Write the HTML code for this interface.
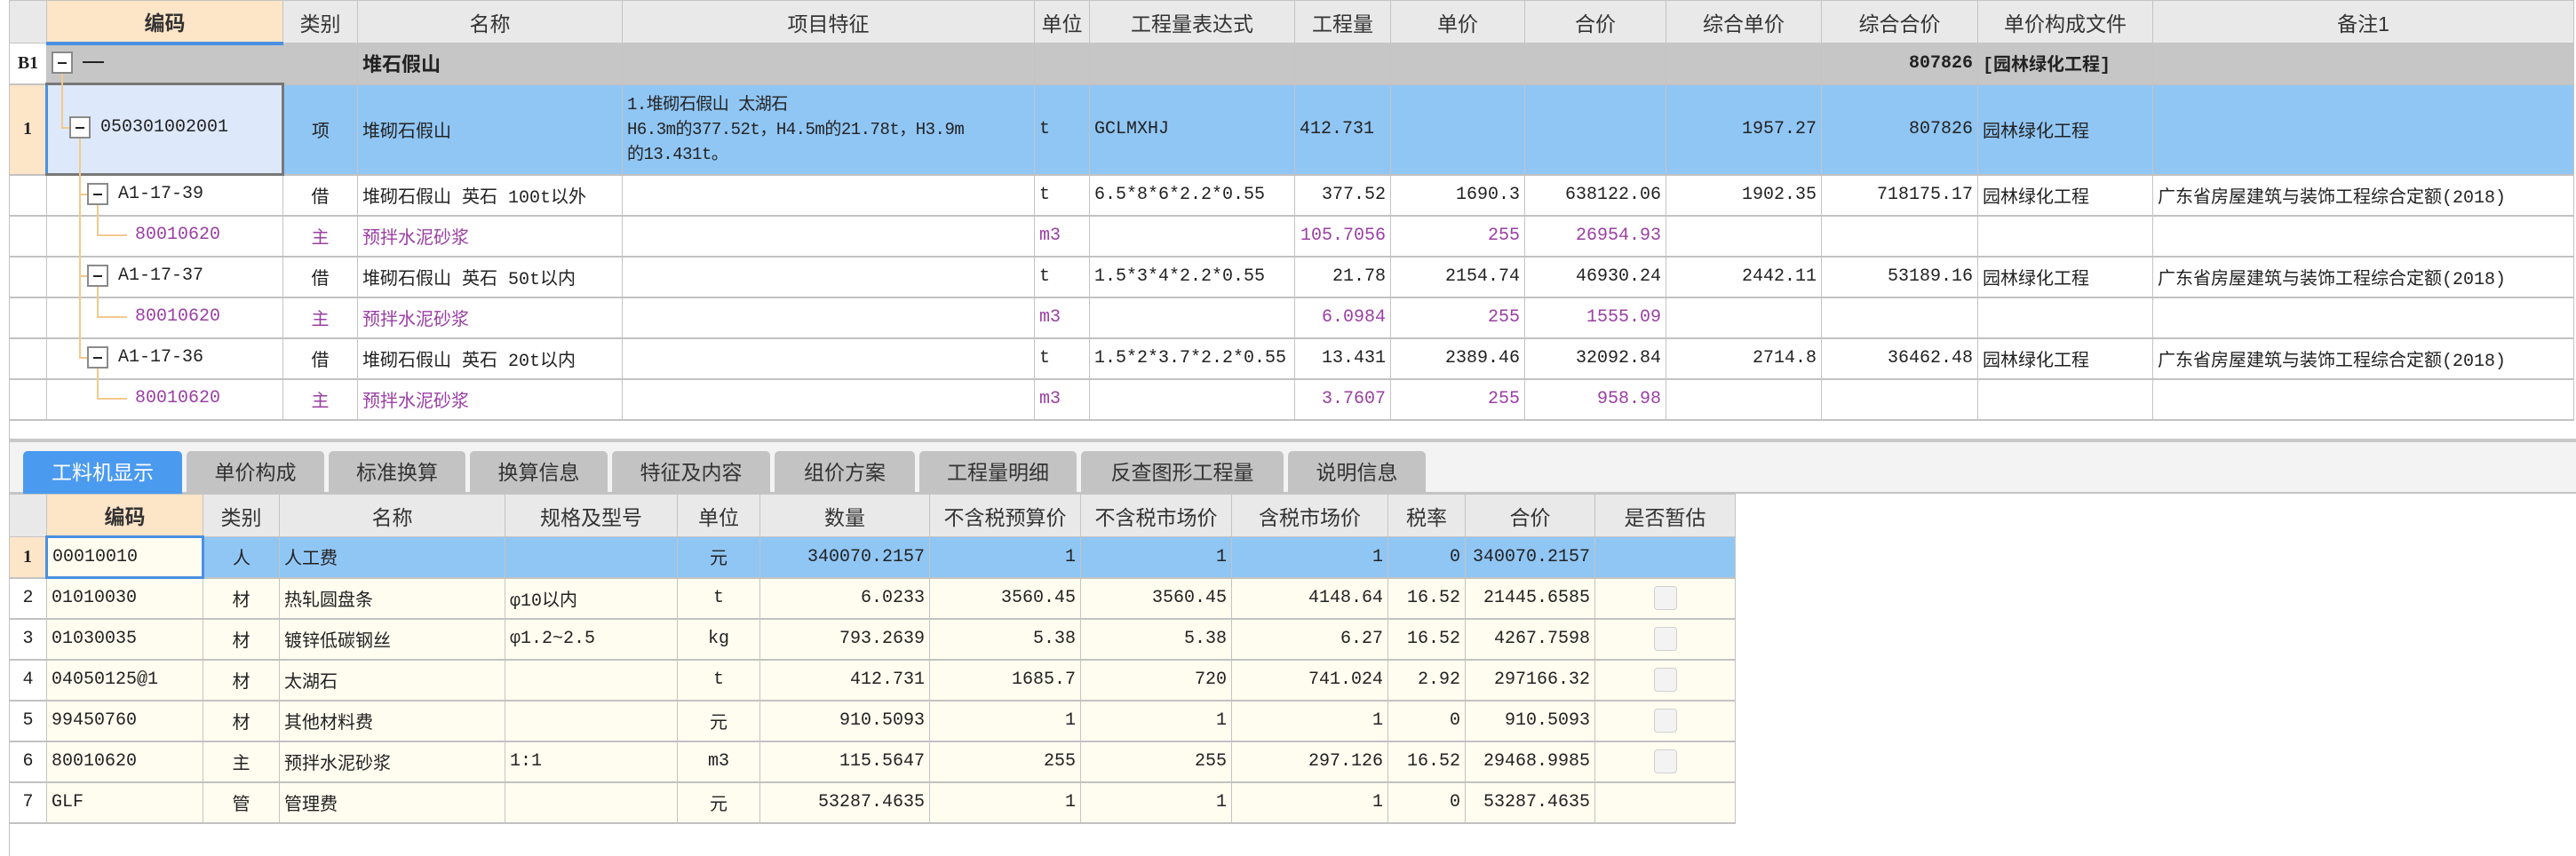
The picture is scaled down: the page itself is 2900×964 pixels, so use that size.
<!DOCTYPE html>
<html><head><meta charset="utf-8"><style>
*{margin:0;padding:0;box-sizing:border-box}
body{width:2900px;height:964px;background:#fff;position:relative;overflow:hidden;font-family:"Liberation Mono","WenQuanYi Zen Hei","Noto Sans CJK SC",monospace;font-size:20px;color:#222}
table{position:absolute;border-collapse:collapse;table-layout:fixed}
td{border:1px solid #c4c4c4;white-space:nowrap;overflow:hidden;padding:0 5px;vertical-align:middle}
tr.h td{background:#e9e9e9;text-align:center;font-family:"Liberation Sans","WenQuanYi Zen Hei","Noto Sans CJK SC",sans-serif;font-size:23px;color:#333}
tr.h td.k{background:#fde5c8;font-weight:bold}
tr.d td{border-bottom:2px solid #c2c2c2}
.c{text-align:center}.r{text-align:right}
.p{color:#9a3fa3}
.blue td{background:#90c6f4}
.num{font-family:"Liberation Serif",serif;font-weight:bold;text-align:center;padding:0}
.box{position:absolute;width:24px;height:25px;border:2px solid #8a8a8a;background:#fff}
.box:after{content:"";position:absolute;left:5px;right:5px;top:10px;height:2px;background:#222}
.ln{position:absolute;background:#f3c98b}
.t{position:absolute;line-height:24px}
.tab{position:absolute;top:508px;height:48px;background:#c3c3c3;border-radius:5px 5px 0 0;text-align:center;line-height:48px;font-family:"Liberation Sans","WenQuanYi Zen Hei","Noto Sans CJK SC",sans-serif;font-size:23px;color:#333}
.cb{display:inline-block;width:26px;height:27px;border:1px solid #d0d0d0;border-radius:4px;background:#f3f3f3;vertical-align:middle}
.iv td{background:#fffdf0}
.iv td.n{background:#fff;text-align:center;padding:0}
</style></head><body>
<div style="position:absolute;left:10px;top:0;width:1px;height:964px;background:#c4c4c4"></div>
<table style="left:10px;top:0;width:2887px">
<colgroup><col style="width:42px"><col style="width:266px"><col style="width:84px"><col style="width:298px"><col style="width:464px"><col style="width:62px"><col style="width:231px"><col style="width:108px"><col style="width:151px"><col style="width:159px"><col style="width:175px"><col style="width:176px"><col style="width:197px"><col style="width:474px"></colgroup>
<tr class="h" style="height:48px"><td></td><td class="k" style="border-bottom:4px solid #4a90e2">编码</td><td>类别</td><td>名称</td><td>项目特征</td><td>单位</td><td>工程量表达式</td><td>工程量</td><td>单价</td><td>合价</td><td>综合单价</td><td>综合合价</td><td>单价构成文件</td><td>备注1</td></tr>
<tr style="height:46px;font-weight:bold" class="d"><td class="num" style="background:#fff">B1</td><td style="background:#c6c6c6"></td><td style="background:#c6c6c6"></td><td style="background:#c6c6c6;font-size:22px">堆石假山</td><td style="background:#c6c6c6"></td><td style="background:#c6c6c6"></td><td style="background:#c6c6c6"></td><td style="background:#c6c6c6"></td><td style="background:#c6c6c6"></td><td style="background:#c6c6c6"></td><td style="background:#c6c6c6"></td><td class="r" style="background:#c6c6c6;overflow:visible">807826</td><td style="background:#c6c6c6;overflow:visible">[园林绿化工程]</td><td style="background:#c6c6c6"></td></tr>
<tr style="height:102px" class="d blue"><td class="num" style="background:#fde5c8">1</td><td style="background:#dde9fb;border:3px solid #777;border-left:3px solid #4a90e2"></td><td class="c">项</td><td>堆砌石假山</td><td style="font-size:19px;line-height:28px;letter-spacing:-0.5px">1.堆砌石假山 太湖石<br>H6.3m的377.52t，H4.5m的21.78t，H3.9m<br>的13.431t。</td><td>t</td><td>GCLMXHJ</td><td>412.731</td><td></td><td></td><td class="r">1957.27</td><td class="r">807826</td><td>园林绿化工程</td><td></td></tr>
<tr style="height:46px" class="d"><td></td><td></td><td class="c">借</td><td>堆砌石假山 英石 100t以外</td><td></td><td>t</td><td>6.5*8*6*2.2*0.55</td><td class="r">377.52</td><td class="r">1690.3</td><td class="r">638122.06</td><td class="r">1902.35</td><td class="r">718175.17</td><td>园林绿化工程</td><td>广东省房屋建筑与装饰工程综合定额(2018)</td></tr>
<tr style="height:46px" class="d p"><td></td><td></td><td class="c">主</td><td>预拌水泥砂浆</td><td></td><td>m3</td><td></td><td class="r">105.7056</td><td class="r">255</td><td class="r">26954.93</td><td></td><td></td><td></td><td></td></tr>
<tr style="height:46px" class="d"><td></td><td></td><td class="c">借</td><td>堆砌石假山 英石 50t以内</td><td></td><td>t</td><td>1.5*3*4*2.2*0.55</td><td class="r">21.78</td><td class="r">2154.74</td><td class="r">46930.24</td><td class="r">2442.11</td><td class="r">53189.16</td><td>园林绿化工程</td><td>广东省房屋建筑与装饰工程综合定额(2018)</td></tr>
<tr style="height:46px" class="d p"><td></td><td></td><td class="c">主</td><td>预拌水泥砂浆</td><td></td><td>m3</td><td></td><td class="r">6.0984</td><td class="r">255</td><td class="r">1555.09</td><td></td><td></td><td></td><td></td></tr>
<tr style="height:46px" class="d"><td></td><td></td><td class="c">借</td><td>堆砌石假山 英石 20t以内</td><td></td><td>t</td><td>1.5*2*3.7*2.2*0.55</td><td class="r">13.431</td><td class="r">2389.46</td><td class="r">32092.84</td><td class="r">2714.8</td><td class="r">36462.48</td><td>园林绿化工程</td><td>广东省房屋建筑与装饰工程综合定额(2018)</td></tr>
<tr style="height:46px" class="d p"><td></td><td></td><td class="c">主</td><td>预拌水泥砂浆</td><td></td><td>m3</td><td></td><td class="r">3.7607</td><td class="r">255</td><td class="r">958.98</td><td></td><td></td><td></td><td></td></tr>
</table>
<div class="ln" style="left:69px;top:82px;width:2px;height:63px"></div>
<div class="ln" style="left:69px;top:143px;width:10px;height:2px"></div>
<div class="ln" style="left:89px;top:156px;width:2px;height:248px"></div>
<div class="ln" style="left:89px;top:218px;width:10px;height:2px"></div>
<div class="ln" style="left:89px;top:310px;width:10px;height:2px"></div>
<div class="ln" style="left:89px;top:402px;width:10px;height:2px"></div>
<div class="ln" style="left:109px;top:230px;width:2px;height:36px"></div>
<div class="ln" style="left:109px;top:264px;width:34px;height:2px"></div>
<div class="ln" style="left:109px;top:322px;width:2px;height:36px"></div>
<div class="ln" style="left:109px;top:356px;width:34px;height:2px"></div>
<div class="ln" style="left:109px;top:414px;width:2px;height:36px"></div>
<div class="ln" style="left:109px;top:448px;width:34px;height:2px"></div>
<div class="box" style="left:58px;top:58px"></div>
<div style="position:absolute;left:93px;top:69px;width:24px;height:2px;background:#222"></div>
<div class="box" style="left:78px;top:131px"></div>
<div class="box" style="left:98px;top:206px"></div>
<div class="box" style="left:98px;top:298px"></div>
<div class="box" style="left:98px;top:390px"></div>
<div class="t" style="left:113px;top:132px">050301002001</div>
<div class="t" style="left:133px;top:207px">A1-17-39</div>
<div class="t p" style="left:152px;top:253px">80010620</div>
<div class="t" style="left:133px;top:299px">A1-17-37</div>
<div class="t p" style="left:152px;top:345px">80010620</div>
<div class="t" style="left:133px;top:391px">A1-17-36</div>
<div class="t p" style="left:152px;top:437px">80010620</div>
<div style="position:absolute;left:10px;top:494px;width:2890px;height:4px;background:#c8c8c8"></div>
<div style="position:absolute;left:11px;top:498px;width:2889px;height:58px;background:#f3f3f3;border-bottom:2px solid #c4c4c4"></div>
<div class="tab" style="left:26px;width:179px;background:#4a9af0;color:#fff">工料机显示</div>
<div class="tab" style="left:210px;width:155px">单价构成</div>
<div class="tab" style="left:370px;width:154px">标准换算</div>
<div class="tab" style="left:529px;width:155px">换算信息</div>
<div class="tab" style="left:689px;width:178px">特征及内容</div>
<div class="tab" style="left:872px;width:158px">组价方案</div>
<div class="tab" style="left:1035px;width:177px">工程量明细</div>
<div class="tab" style="left:1217px;width:228px">反查图形工程量</div>
<div class="tab" style="left:1450px;width:155px">说明信息</div>
<table style="left:10px;top:556px;width:1943px">
<colgroup><col style="width:42px"><col style="width:176px"><col style="width:86px"><col style="width:254px"><col style="width:194px"><col style="width:93px"><col style="width:191px"><col style="width:170px"><col style="width:170px"><col style="width:176px"><col style="width:87px"><col style="width:146px"><col style="width:158px"></colgroup>
<tr class="h" style="height:48px"><td></td><td class="k">编码</td><td>类别</td><td>名称</td><td>规格及型号</td><td>单位</td><td>数量</td><td>不含税预算价</td><td>不含税市场价</td><td>含税市场价</td><td>税率</td><td>合价</td><td>是否暂估</td></tr>
<tr style="height:46px" class="d blue"><td class="num" style="background:#fde5c8">1</td><td style="background:#fffdf0;border:3px solid #4a90e2">00010010</td><td class="c">人</td><td>人工费</td><td></td><td class="c">元</td><td class="r">340070.2157</td><td class="r">1</td><td class="r">1</td><td class="r">1</td><td class="r">0</td><td class="r">340070.2157</td><td></td></tr>
<tr style="height:46px" class="d iv"><td class="n">2</td><td>01010030</td><td class="c">材</td><td>热轧圆盘条</td><td>φ10以内</td><td class="c">t</td><td class="r">6.0233</td><td class="r">3560.45</td><td class="r">3560.45</td><td class="r">4148.64</td><td class="r">16.52</td><td class="r">21445.6585</td><td class="c"><span class="cb"></span></td></tr>
<tr style="height:46px" class="d iv"><td class="n">3</td><td>01030035</td><td class="c">材</td><td>镀锌低碳钢丝</td><td>φ1.2~2.5</td><td class="c">kg</td><td class="r">793.2639</td><td class="r">5.38</td><td class="r">5.38</td><td class="r">6.27</td><td class="r">16.52</td><td class="r">4267.7598</td><td class="c"><span class="cb"></span></td></tr>
<tr style="height:46px" class="d iv"><td class="n">4</td><td>04050125@1</td><td class="c">材</td><td>太湖石</td><td></td><td class="c">t</td><td class="r">412.731</td><td class="r">1685.7</td><td class="r">720</td><td class="r">741.024</td><td class="r">2.92</td><td class="r">297166.32</td><td class="c"><span class="cb"></span></td></tr>
<tr style="height:46px" class="d iv"><td class="n">5</td><td>99450760</td><td class="c">材</td><td>其他材料费</td><td></td><td class="c">元</td><td class="r">910.5093</td><td class="r">1</td><td class="r">1</td><td class="r">1</td><td class="r">0</td><td class="r">910.5093</td><td class="c"><span class="cb"></span></td></tr>
<tr style="height:46px" class="d iv"><td class="n">6</td><td>80010620</td><td class="c">主</td><td>预拌水泥砂浆</td><td>1:1</td><td class="c">m3</td><td class="r">115.5647</td><td class="r">255</td><td class="r">255</td><td class="r">297.126</td><td class="r">16.52</td><td class="r">29468.9985</td><td class="c"><span class="cb"></span></td></tr>
<tr style="height:46px" class="d iv"><td class="n">7</td><td>GLF</td><td class="c">管</td><td>管理费</td><td></td><td class="c">元</td><td class="r">53287.4635</td><td class="r">1</td><td class="r">1</td><td class="r">1</td><td class="r">0</td><td class="r">53287.4635</td><td></td></tr>
</table>
</body></html>
